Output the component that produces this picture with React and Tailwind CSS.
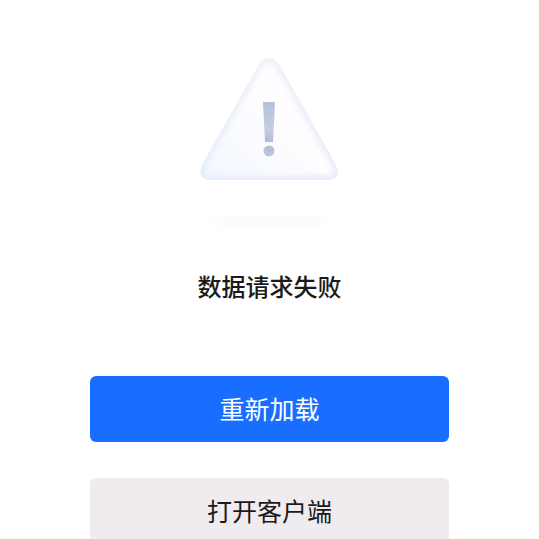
import React from 'react';

const WarningIllustration = () => (
  <svg className="w-40 h-48" viewBox="1 -1 160 192" fill="none" aria-hidden="true">
    <defs>
      <linearGradient id="face" x1="30" y1="135" x2="95" y2="70" gradientUnits="userSpaceOnUse">
        <stop offset="0" stopColor="#f3f7ff" />
        <stop offset="0.5" stopColor="#fafbff" />
        <stop offset="1" stopColor="#fefdff" />
      </linearGradient>
      <linearGradient id="edge" x1="80" y1="12" x2="80" y2="136" gradientUnits="userSpaceOnUse">
        <stop offset="0" stopColor="#eff1f8" />
        <stop offset="1" stopColor="#e7edfa" />
      </linearGradient>
      <linearGradient id="mark" x1="82" y1="56" x2="78" y2="112" gradientUnits="userSpaceOnUse">
        <stop offset="0" stopColor="#b4c0dc" />
        <stop offset="0.5" stopColor="#c3cde4" />
        <stop offset="0.75" stopColor="#b3bbd4" />
        <stop offset="1" stopColor="#bfc7df" />
      </linearGradient>
      <filter id="soft" x="-10%" y="-10%" width="120%" height="120%">
        <feGaussianBlur stdDeviation="2.5" />
      </filter>
      <filter id="shadowBlur" x="-20%" y="-80%" width="140%" height="260%">
        <feGaussianBlur stdDeviation="3" />
      </filter>
      <clipPath id="triangle">
        <path d="M71 18Q80 8 89 18Q92 22 95 28L146 118Q154 135 139 135H22Q6 135 14 118L65 28Q68 22 71 18Z" />
      </clipPath>
    </defs>
    <g clipPath="url(#triangle)">
      <rect width="160" height="140" fill="url(#face)" />
      <path
        d="M71 18Q80 8 89 18Q92 22 95 28L146 118Q154 135 139 135H22Q6 135 14 118L65 28Q68 22 71 18Z"
        stroke="url(#edge)"
        strokeWidth="9"
        filter="url(#soft)"
      />
    </g>
    <path d="M74 57H86L84 97H76Z" fill="url(#mark)" />
    <circle cx="80" cy="106" r="5.5" fill="url(#mark)" />
    <rect x="24" y="171" width="112" height="11" rx="5" fill="#fffafc" filter="url(#shadowBlur)" />
  </svg>
);

const ActionButton = ({ primary, children }) => (
  <button
    type="button"
    className={`w-full rounded-md pt-[15px] pb-[17px] text-[25px] leading-[34px] ${
      primary ? 'bg-[#1a6eff] text-white' : 'bg-[#efebee] text-[#1a1a1a]'
    }`}
  >
    {children}
  </button>
);

const App = () => (
  <main
    lang="zh-CN"
    className="flex min-h-screen flex-col items-center bg-white pt-11 font-['Noto_Sans_CJK_SC',sans-serif]"
  >
    <WarningIllustration />
    <h1 className="mt-8 text-2xl leading-9 font-medium text-[#1a1a1a]">数据请求失败</h1>
    <div className="mt-[72px] flex w-2/3 flex-col gap-9">
      <ActionButton primary>重新加载</ActionButton>
      <ActionButton>打开客户端</ActionButton>
    </div>
  </main>
);

export default App;
